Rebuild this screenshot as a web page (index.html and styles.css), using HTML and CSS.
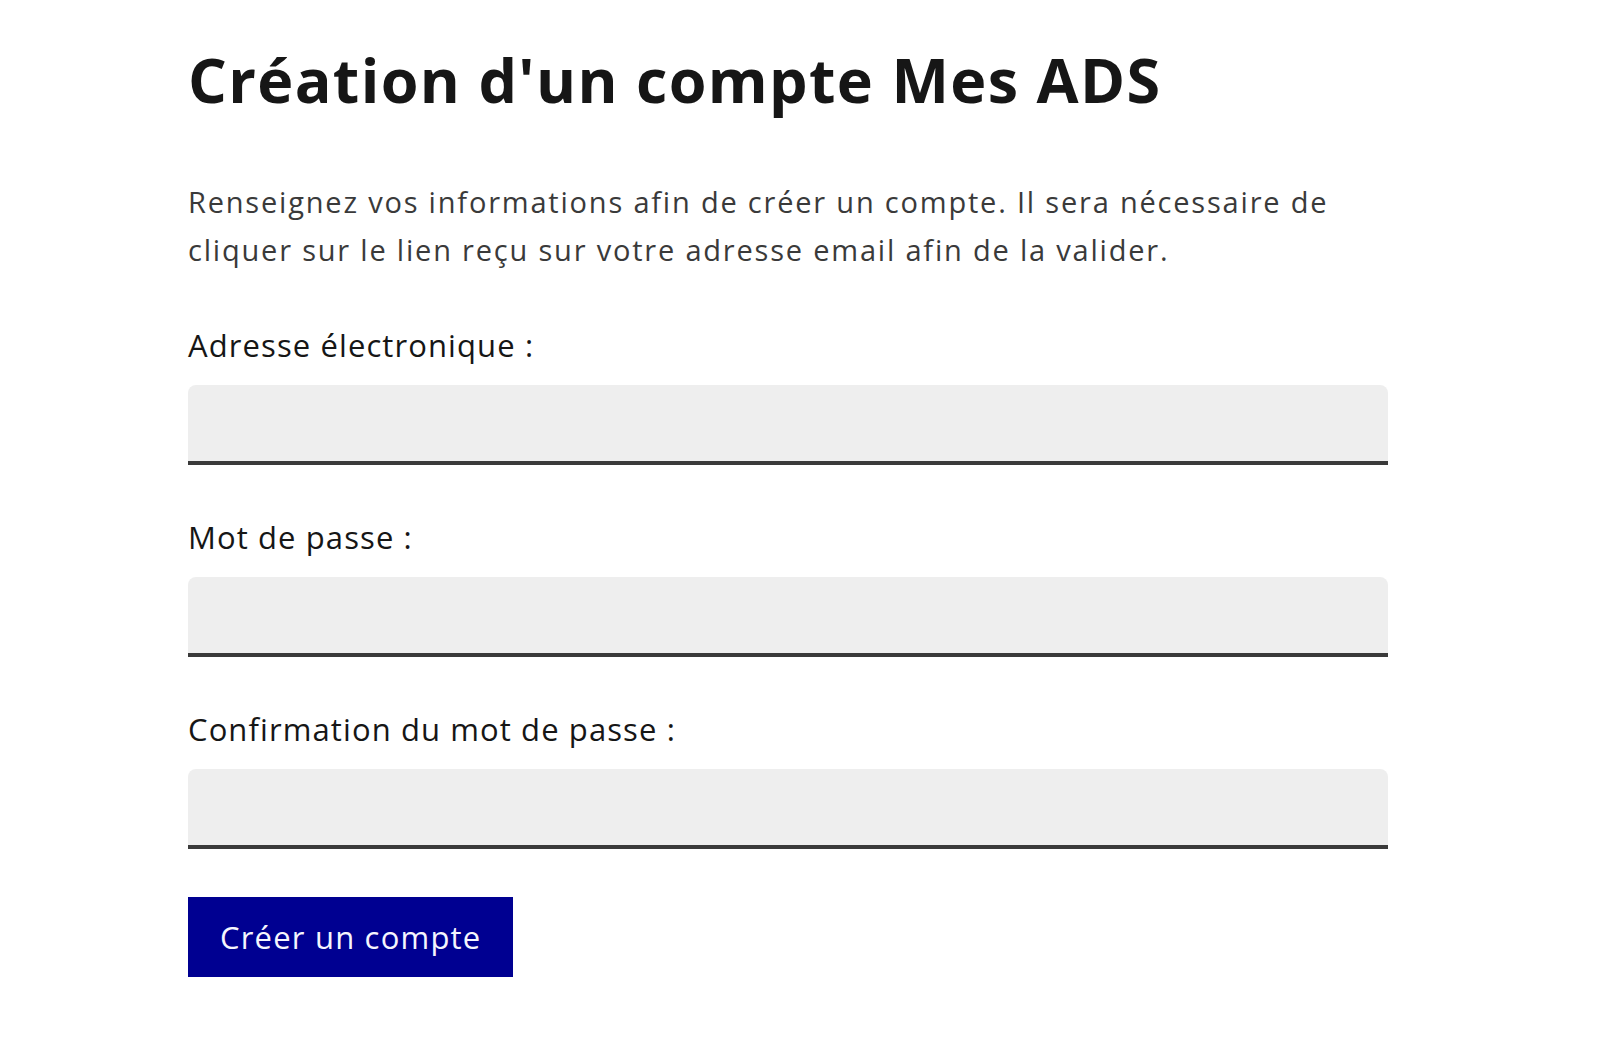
FILE: index.html
```html
<!DOCTYPE html>
<html lang="fr">
<head>
<meta charset="utf-8">
<title>Création d'un compte Mes ADS</title>
<link rel="stylesheet" href="styles.css">
</head>
<body>
<main class="page">
  <h1 class="title">Création d'un compte Mes ADS</h1>
  <p class="lead">Renseignez vos informations afin de créer un compte. Il sera nécessaire de cliquer sur le lien reçu sur votre adresse email afin de la valider.</p>
  <form class="form">
    <div class="field">
      <label class="label" for="email">Adresse électronique :</label>
      <input class="input" id="email" type="email">
    </div>
    <div class="field">
      <label class="label" for="pw1">Mot de passe :</label>
      <input class="input" id="pw1" type="password">
    </div>
    <div class="field">
      <label class="label" for="pw2">Confirmation du mot de passe :</label>
      <input class="input" id="pw2" type="password">
    </div>
    <div class="actions">
      <button class="btn" type="button">Créer un compte</button>
    </div>
  </form>
</main>
</body>
</html>
```

FILE: styles.css
```css
html, body {
  margin: 0;
  padding: 0;
  background: #ffffff;
}
body {
  font-family: "Open Sans", Lato, sans-serif;
  color: #161616;
}
.page {
  padding: 44px 0 0 188px;
  width: 1200px;
}
.title {
  margin: 0;
  font-size: 61px;
  line-height: 72px;
  font-weight: 700;
  letter-spacing: 1.35px;
  color: #161616;
}
.lead {
  margin: 62px 0 0 0;
  width: 1200px;
  font-size: 29px;
  line-height: 48px;
  letter-spacing: 1.8px;
  color: #3a3a3a;
}
.form {
  margin-top: 51px;
  display: flex;
  flex-direction: column;
  gap: 52px;
}
.field {
  display: flex;
  flex-direction: column;
  gap: 20px;
  width: 1200px;
}
.label {
  font-size: 31px;
  line-height: 40px;
  letter-spacing: 1.1px;
  color: #161616;
}
.input {
  display: block;
  box-sizing: border-box;
  width: 1200px;
  height: 80px;
  margin: 0;
  border: 0;
  border-radius: 8px 8px 0 0;
  background: #eeeeee;
  box-shadow: inset 0 -4px 0 0 #3a3a3a;
  padding: 16px 32px;
  font-family: inherit;
  font-size: 30px;
  outline: none;
}
.actions {
  margin-top: -4px;
}
.btn {
  display: inline-flex;
  align-items: center;
  justify-content: center;
  height: 80px;
  padding: 0 32px;
  border: 0;
  border-radius: 0;
  background: #000091;
  color: #f5f5fe;
  font-family: inherit;
  font-size: 31px;
  font-weight: 500;
  letter-spacing: 1.2px;
  cursor: pointer;
}
```
